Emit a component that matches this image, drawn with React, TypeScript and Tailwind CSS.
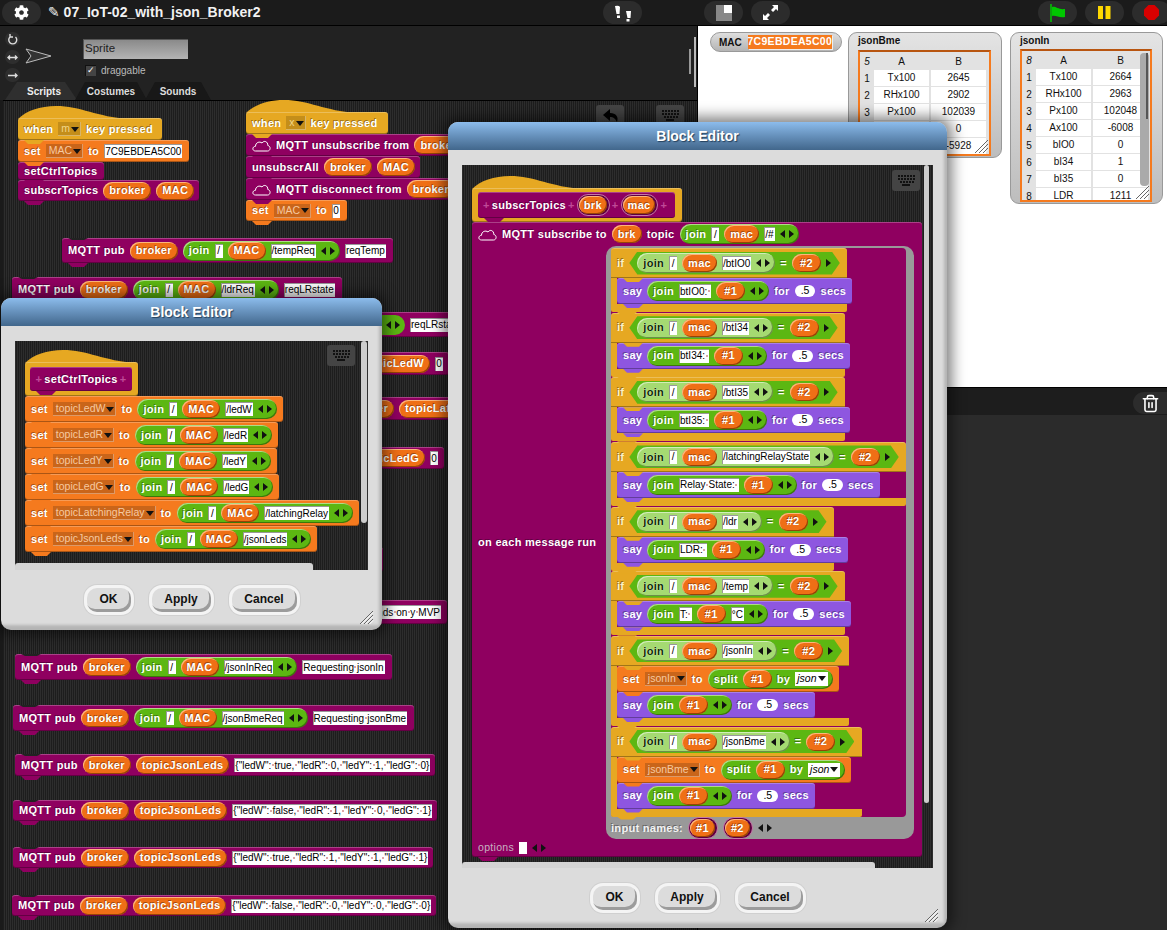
import React from 'react';
import { FaCog } from 'react-icons/fa';
import { Trash2 } from 'lucide-react';

type Tone = 'purple' | 'orange' | 'yellow' | 'violet';

const tones: Record<Tone, string> = {
  purple: 'bg-[#8f0060]',
  orange: 'bg-[#f57a1e]',
  yellow: 'bg-[#e6a822]',
  violet: 'bg-[#8e56e0]',
};

const stripes =
  'bg-[repeating-linear-gradient(90deg,#2d2d2d_0px,#2d2d2d_1px,#1d1d1d_1px,#1d1d1d_2px)]';

const Block: React.FC<{
  tone?: Tone;
  className?: string;
  bump?: boolean;
  notch?: boolean;
  children?: React.ReactNode;
}> = ({ tone = 'purple', className = '', bump = true, notch = false, children }) => (
  <div
    className={`relative flex shrink-0 items-center gap-[5px] self-start whitespace-nowrap rounded-[3px] pl-[6px] pr-[6px] text-[11px] font-bold tracking-[0.3px] text-white [text-shadow:-1px_-1px_0_rgba(0,0,0,0.35)] shadow-[inset_0_1px_0_rgba(255,255,255,0.25),inset_0_-1px_0_rgba(0,0,0,0.3)] ${tones[tone]} ${className}`}
  >
    {notch && (
      <span className="absolute left-[6px] top-0 h-[2px] w-[20px] bg-[#222] [clip-path:polygon(0_0,100%_0,80%_100%,20%_100%)]" />
    )}
    {children}
    {bump && (
      <span
        className={`absolute left-[6px] top-full z-10 h-[4px] w-[20px] [clip-path:polygon(0_0,100%_0,80%_100%,20%_100%)] ${tones[tone]}`}
      />
    )}
  </div>
);

const HatCurve = () => (
  <svg className="absolute bottom-full left-0 -mb-px" width="110" height="13" viewBox="0 0 110 13">
    <path d="M0 13 C8 5 22 0 38 0 C62 0 80 11 110 13 Z" fill="#e6a822" />
  </svg>
);

const Pill: React.FC<{ children: React.ReactNode; className?: string }> = ({ children, className = '' }) => (
  <span
    className={`inline-flex h-[18px] shrink-0 items-center rounded-full bg-[#ef6f16] px-[6px] text-[11px] font-bold text-white shadow-[inset_1px_1px_0_rgba(255,200,150,0.8),inset_-1px_-1px_0_rgba(110,50,0,0.7)] ${className}`}
  >
    {children}
  </span>
);

const Hash: React.FC<{ children: string }> = ({ children }) => <Pill className="px-[8px]!">{children}</Pill>;

const Param: React.FC<{ children: React.ReactNode; pad: string }> = ({ children, pad }) => (
  <span className="inline-flex rounded-full border border-[#c47aa8] bg-[#5e0040] p-px pr-[2px]">
    <Pill className={pad}>{children}</Pill>
  </span>
);

const Plus = () => <span className="text-[#c04a98] [text-shadow:none]">+</span>;

const Txt: React.FC<{ children: string }> = ({ children }) => (
  <span className="inline-flex h-[14px] min-w-[8px] shrink-0 items-center justify-center bg-white px-[1px] text-[10px] font-normal tracking-normal text-black [text-shadow:none] shadow-[inset_1px_1px_0_#999]">
    {children.split('·').map((part, i) => (
      <React.Fragment key={i}>
        {i > 0 && <span className="mx-[0.5px] h-[2px] w-[2px] rounded-full bg-[#d08a8a]" />}
        {part}
      </React.Fragment>
    ))}
  </span>
);

const Num: React.FC<{ children: string }> = ({ children }) => (
  <span className="inline-flex h-[12px] shrink-0 items-center rounded-full bg-white px-[6px] text-[10.5px] font-normal tracking-normal text-black [text-shadow:none]">
    {children}
  </span>
);

const Caret: React.FC<{ className?: string }> = ({ className = '' }) => (
  <svg className={`shrink-0 ${className}`} width="8" height="5" viewBox="0 0 8 5">
    <path d="M0 0H8L4 5Z" fill="#111" />
  </svg>
);

const Drop: React.FC<{ children: string; yellow?: boolean }> = ({ children, yellow }) => (
  <span
    className={`inline-flex h-[14px] shrink-0 items-center gap-[1px] pl-[3px] pr-[2px] text-[10.5px] font-normal tracking-normal [text-shadow:none] shadow-[inset_-1px_-1px_0_rgba(255,255,255,0.35)] ${
      yellow ? 'bg-[#c48e1a] text-[#f2d689]' : 'bg-[#c9651a] text-[#f6c9a0]'
    }`}
  >
    {children}
    <Caret />
  </span>
);

const Arrows: React.FC = () => (
  <svg className="shrink-0" width="14" height="10" viewBox="0 0 14 10">
    <path d="M5 1 L0 5 L5 9Z M9 1 L14 5 L9 9Z" fill="#111" />
  </svg>
);

const Join: React.FC<{ children: React.ReactNode; light?: boolean; label?: string }> = ({
  children,
  light,
  label = 'join',
}) => (
  <span
    className={`inline-flex h-[20px] shrink-0 items-center gap-[5px] rounded-full pl-[6px] pr-[5px] shadow-[inset_1px_1px_0_rgba(255,255,255,0.5),inset_-1px_-1px_0_rgba(0,0,0,0.35)] ${
      light ? 'bg-[#a5da72]' : 'bg-[#5cb712]'
    }`}
  >
    {label && <span className={light ? 'text-[#0e2a00] [text-shadow:0_0_1px_#fff]' : ''}>{label}</span>}
    {children}
  </span>
);

const Cloud = () => (
  <svg className="shrink-0" width="19" height="13" viewBox="0 0 19 13">
    <path
      d="M3.5 12 C0 12 0 7.5 3.5 7.3 C3.5 3.5 7.5 2 10 4 C12 1 16 2.5 15.8 6.5 C19 7 18.8 12 15.5 12 Z"
      fill="none"
      stroke="#fff"
    />
  </svg>
);

const Pub: React.FC<{ topic?: string; join?: string; text: string; className?: string }> = ({
  topic,
  join,
  text,
  className = '',
}) => (
  <Block notch className={className}>
    <span>MQTT pub</span>
    <Pill>broker</Pill>
    {topic && <Pill>{topic}</Pill>}
    {join && (
      <Join>
        <Txt>/</Txt>
        <Pill>MAC</Pill>
        <Txt>{join}</Txt>
        <Arrows />
      </Join>
    )}
    <Txt>{text}</Txt>
  </Block>
);

const SetTopic: React.FC<{ name: string; path: string }> = ({ name, path }) => (
  <Block tone="orange" className="h-[26px]">
    <span>set</span>
    <Drop>{name}</Drop>
    <span>to</span>
    <Join>
      <Txt>/</Txt>
      <Pill>MAC</Pill>
      <Txt>{path}</Txt>
      <Arrows />
    </Join>
  </Block>
);

const Pred: React.FC<{ path: string }> = ({ path }) => (
  <span className="inline-flex h-[23px] shrink-0 items-center gap-[5px] bg-[#5cb712] pl-[8px] pr-[9px] [clip-path:polygon(8px_0,calc(100%-8px)_0,100%_50%,calc(100%-8px)_100%,8px_100%,0_50%)]">
    <Join light>
      <Txt>/</Txt>
      <Pill>mac</Pill>
      <Txt>{path}</Txt>
      <Arrows />
    </Join>
    <span>=</span>
    <Hash>#2</Hash>
    <svg className="shrink-0" width="5" height="10" viewBox="0 0 5 10">
      <path d="M0 1 L5 5 L0 9Z" fill="#111" />
    </svg>
  </span>
);

const Say: React.FC<{ args: React.ReactNode }> = ({ args }) => (
  <Block tone="violet" className="h-[26px]">
    <span>say</span>
    <Join>
      {args}
      <Arrows />
    </Join>
    <span>for</span>
    <Num>.5</Num>
    <span>secs</span>
  </Block>
);

const SetSplit: React.FC<{ name: string }> = ({ name }) => (
  <Block tone="orange" className="h-[26px]">
    <span>set</span>
    <Drop>{name}</Drop>
    <span>to</span>
    <Join label="split">
      <Hash>#1</Hash>
      <span>by</span>
      <span className="inline-flex h-[14px] items-center gap-[1px] bg-white px-[2px] text-[10.5px] font-normal italic tracking-normal text-black [text-shadow:none]">
        json
        <Caret />
      </span>
    </Join>
  </Block>
);

const If: React.FC<{ path: string; width: string; children: React.ReactNode }> = ({ path, width, children }) => (
  <div className={`relative flex flex-col ${width}`}>
    <Block tone="yellow" bump={false} className="h-[30px] w-full rounded-b-none!">
      <span className="text-[#fff0c8]">if</span>
      <Pred path={path} />
      <span className="absolute left-[12px] top-full z-10 h-[4px] w-[20px] bg-[#e6a822] [clip-path:polygon(0_0,100%_0,80%_100%,20%_100%)]" />
    </Block>
    <div className="flex flex-col border-l-[6px] border-[#e6a822]">{children}</div>
    <div className="relative h-[8px] rounded-b-[2px] bg-[#e6a822]">
      <span className="absolute left-[6px] top-full z-10 h-[3px] w-[20px] bg-[#e6a822] [clip-path:polygon(0_0,100%_0,80%_100%,20%_100%)]" />
    </div>
  </div>
);

const Keyboard: React.FC<{ className?: string }> = ({ className = '' }) => (
  <div className={`absolute flex h-[21px] w-[28px] items-center justify-center rounded-[3px] bg-[#444] ${className}`}>
    <svg width="18" height="11" viewBox="0 0 18 11">
      <path
        d="M1 0h2v2H1zM4 0h2v2H4zM7 0h2v2H7zM10 0h2v2h-2zM13 0h2v2h-2zM16 0h2v2h-2zM1 3h2v2H1zM4 3h2v2H4zM7 3h2v2H7zM10 3h2v2h-2zM13 3h2v2h-2zM16 3h2v2h-2zM3 6h2v2H3zM6 6h2v2H6zM9 6h2v2H9zM12 6h2v2h-2zM15 6h2v2h-2zM5 9h8v2H5z"
        fill="#111"
      />
    </svg>
  </div>
);

const DialogButton: React.FC<{ children: string; width: string }> = ({ children, width }) => (
  <div className={`flex h-[30px] items-center justify-center rounded-[13px] bg-[#f4f4f4] p-[3px] shadow-[0_0_0_1px_#d0d0d0] ${width}`}>
    <div className="flex h-full w-full items-center justify-center rounded-[10px] bg-[#dcdcdc] pb-[2px] text-[12px] font-bold text-[#111] shadow-[inset_-2px_-3px_0_#9c9c9c]">
      {children}
    </div>
  </div>
);

const Grip: React.FC<{ className?: string }> = ({ className = '' }) => (
  <svg className={`absolute ${className}`} width="15" height="15" viewBox="0 0 15 15">
    <path d="M14 1 L1 14 M14 5 L5 14 M14 9 L9 14" stroke="#666" strokeWidth="1" />
    <path d="M14 2.5 L2.5 14 M14 6.5 L6.5 14 M14 10.5 L10.5 14" stroke="#fff" strokeWidth="1" />
  </svg>
);

const Dialog: React.FC<{ className: string; children: React.ReactNode }> = ({ className, children }) => (
  <div
    className={`absolute z-20 flex flex-col overflow-hidden rounded-[10px] bg-[#dcdcdc] shadow-[0_0_14px_5px_rgba(0,0,0,0.5)] ${className}`}
  >
    <div className="flex h-[28px] shrink-0 items-center justify-center bg-gradient-to-b from-[#8cbcec] to-[#42678c] text-[14px] font-bold text-white [text-shadow:1px_1px_1px_#24405c]">
      Block Editor
    </div>
    <div className="flex min-h-0 flex-1 flex-col px-[14px] pt-[15px] pb-[15px] shadow-[inset_-3px_-5px_3px_rgba(0,0,0,0.18)]">
      {children}
      <div className="mt-[15px] flex shrink-0 justify-center gap-[15px]">
        <DialogButton width="w-[50px]">OK</DialogButton>
        <DialogButton width="w-[65px]">Apply</DialogButton>
        <DialogButton width="w-[71px]">Cancel</DialogButton>
      </div>
    </div>
    <Grip className="bottom-[5px] right-[8px]" />
  </div>
);

const Watcher: React.FC<{
  title: string;
  count: string;
  rows: string[][];
  className: string;
  frame: string;
  scroll?: boolean;
}> = ({ title, count, rows, className, frame, scroll }) => (
  <div
    className={`absolute flex flex-col rounded-[9px] border border-[#999] bg-gradient-to-b from-[#e4e4e4] to-[#bdbdbd] px-[9px] pt-[2px] ${className}`}
  >
    <div className="pb-[2px] text-[10px] font-bold leading-[12px] text-[#111]">{title}</div>
    <div className={`relative overflow-hidden border-2 border-[#f57a1e] border-t-[#b85510] bg-[#e2e2e2] ${frame}`}>
      <div className="flex h-[18px] items-center text-center text-[10px] text-[#111]">
        <span className="w-[14px] italic">{count}</span>
        <span className="w-[55px]">A</span>
        <span className="ml-[2px] w-[55px]">B</span>
      </div>
      {rows.map(([a, b], i) => (
        <div key={a} className="mb-px flex h-[16px] items-center text-center text-[10px] text-[#111]">
          <span className="w-[14px]">{i + 1}</span>
          <span className="h-full w-[55px] bg-white leading-[16px]">{a}</span>
          <span className="ml-[2px] h-full w-[55px] bg-white leading-[16px]">{b}</span>
        </div>
      ))}
      {scroll && (
        <div className="absolute right-[1px] top-[2px] h-[133px] w-[9px] rounded-[4px] bg-[#aaa]">
          <span className="absolute left-[6px] top-0 h-[66px] w-[2px] bg-[#555]" />
        </div>
      )}
      <Grip className="bottom-0 right-0" />
    </div>
  </div>
);

const TopPill: React.FC<{ className?: string; children: React.ReactNode }> = ({ className = '', children }) => (
  <div className={`flex h-[23px] w-[39px] shrink-0 items-center justify-center rounded-full bg-[#2c2c2c] ${className}`}>
    {children}
  </div>
);

const RoundBtn: React.FC<{ d: string }> = ({ d }) => (
  <div className="flex h-[15px] w-[15px] items-center justify-center rounded-full bg-[#2e2e2e]">
    <svg width="11" height="11" viewBox="0 0 11 11">
      <path d={d} fill="none" stroke="#ddd" strokeWidth="1.4" />
    </svg>
  </div>
);

const bmeRows = [
  ['Tx100', '2645'],
  ['RHx100', '2902'],
  ['Px100', '102039'],
  ['Ax100', '0'],
  ['bIO0', '-5928'],
];

const inRows = [
  ['Tx100', '2664'],
  ['RHx100', '2963'],
  ['Px100', '102048'],
  ['Ax100', '-6008'],
  ['bIO0', '0'],
  ['bI34', '1'],
  ['bI35', '0'],
  ['LDR', '1211'],
];

const App: React.FC = () => (
  <div className="relative h-[930px] w-[1167px] overflow-hidden bg-[#222] font-['Liberation_Sans',Arial,sans-serif]">
    {/* top bar */}
    <div className="flex h-[26px] items-center border-b border-black bg-[#1b1b1b]">
      <div className="flex w-[603px] shrink-0 items-center">
        <TopPill className="ml-[2px]">
          <FaCog size={15} color="#fff" />
        </TopPill>
        <span className="ml-[7px] whitespace-nowrap text-[14px] font-bold text-[#f2f2f2]">
          <span className="font-['DejaVu_Sans',sans-serif] font-normal">✎</span> 07_IoT-02_with_json_Broker2
        </span>
      </div>
      <TopPill>
        <svg width="18" height="18" viewBox="0 0 18 18">
          <path d="M1 2 Q5 1 6 3 L5.500 10 H2.500 Z M3 11.500 h3 v2.500 h-3z M12 7 h5 l-.5 7 h-3 Z M12.500 15 h3 v2.500 h-3z" fill="#fff" />
        </svg>
      </TopPill>
      <TopPill className="ml-[62px]">
        <svg width="18" height="18" viewBox="0 0 18 18">
          <rect x="1" y="1" width="16" height="16" fill="#888" />
          <rect x="9" y="1" width="8" height="8" fill="#fff" />
        </svg>
      </TopPill>
      <TopPill className="ml-[8px]">
        <svg width="17" height="17" viewBox="0 0 17 17">
          <path d="M10 1 H16 V7 L14 5 L11 8 L9 6 L12 3Z M7 16 H1 V10 L3 12 L6 9 L8 11 L5 14Z" fill="#fff" />
        </svg>
      </TopPill>
      <TopPill className="ml-auto">
        <svg width="16" height="18" viewBox="0 0 16 18">
          <path d="M1 0 V18" stroke="#00c800" strokeWidth="1.5" />
          <path d="M2 3 C6 2 8 6 15 5 V13 C9 14 6 11 2 12Z" fill="#00c800" />
        </svg>
      </TopPill>
      <TopPill className="ml-[8px]">
        <svg width="13" height="13" viewBox="0 0 13 13">
          <path d="M0 0H5V13H0Z M7.500 0H12.500V13H7.500Z" fill="#ffd800" />
        </svg>
      </TopPill>
      <TopPill className="-mr-[4px] ml-[8px]">
        <svg width="15" height="15" viewBox="0 0 15 15">
          <path d="M4.500 0H10.500L15 4.500V10.500L10.500 15H4.500L0 10.500V4.500Z" fill="#d80000" />
        </svg>
      </TopPill>
    </div>

    <div className="flex h-[904px]">
      {/* sprite editor */}
      <div className="flex w-[698px] shrink-0 flex-col border-r border-black">
        <div className="relative flex h-[74px] shrink-0 flex-col bg-[#222]">
          <div className="flex h-[56px] pl-[5px] pt-[6px]">
            <div className="flex flex-col gap-[4px]">
              <RoundBtn d="M8.500 3 A4 4 0 1 1 3 3 M3 0 V3 H6" />
              <RoundBtn d="M1 5.500 H10 M3 3.500 L1 5.500 L3 7.500 M8 3.500 L10 5.500 L8 7.500" />
              <RoundBtn d="M1 5.500 H10 M8 3.500 L10 5.500 L8 7.500" />
            </div>
            <svg className="ml-[5px] mt-[16px]" width="28" height="16" viewBox="0 0 28 16">
              <path d="M1 1 L26 8 L1 15 L6 8Z" fill="#333" stroke="#bbb" strokeWidth="1" />
            </svg>
            <div className="ml-[30px] mt-[7px] flex flex-col">
              <div className="flex h-[20px] w-[105px] items-center bg-gradient-to-b from-[#888] to-[#b4b4b4] pl-[2px] text-[11.5px] text-[#222] shadow-[inset_1px_1px_0_#555]">
                Sprite
              </div>
              <div className="ml-[2px] mt-[4px] flex items-center gap-[5px] text-[10px] text-[#bbb]">
                <span className="flex h-[11px] w-[11px] items-center justify-center bg-[#444] text-[9px] leading-none text-white shadow-[inset_1px_1px_0_#111]">
                  ✓
                </span>
                draggable
              </div>
            </div>
          </div>
          <div className="absolute bottom-0 left-[5px] flex text-[10px] font-bold">
            <div className="flex h-[18px] w-[72px] items-center justify-center bg-[#2f2f2f] pl-[6px] text-[#eee] [clip-path:polygon(12px_0,60px_0,72px_100%,0_100%)]">
              Scripts
            </div>
            <div className="-ml-[2px] flex h-[18px] w-[72px] items-center justify-center bg-[#181818] text-[#ddd] [clip-path:polygon(10px_0,62px_0,72px_100%,0_100%)]">
              Costumes
            </div>
            <div className="-ml-[2px] flex h-[18px] w-[66px] items-center justify-center bg-[#181818] text-[#ddd] [clip-path:polygon(10px_0,56px_0,66px_100%,0_100%)]">
              Sounds
            </div>
          </div>
          <span className="absolute right-[1px] top-[11px] h-[50px] w-[2px] bg-[#bbb]" />
          <span className="absolute right-[6px] top-[23px] h-[25px] w-[2px] bg-[#999]" />
        </div>

        {/* scripts canvas: blocks sit where the user dropped them */}
        <div className={`relative flex-1 shadow-[inset_3px_0_0_#1a1a1a,inset_0_1px_0_#000] ${stripes}`}>
          <div className="absolute left-[18px] top-[18px] flex flex-col">
            <div className="relative">
              <HatCurve />
              <Block tone="yellow" className="h-[22px] w-[144px]">
                <span>when</span>
                <Drop yellow>m</Drop>
                <span>key pressed</span>
              </Block>
            </div>
            <Block tone="orange" className="h-[22px] w-[171px]">
              <span>set</span>
              <Drop>MAC</Drop>
              <span>to</span>
              <Txt>7C9EBDEA5C00</Txt>
            </Block>
            <Block className="h-[18px] w-[86px]">
              <span>setCtrlTopics</span>
            </Block>
            <Block className="h-[21px] w-[181px]">
              <span>subscrTopics</span>
              <Pill>broker</Pill>
              <Pill>MAC</Pill>
            </Block>
          </div>

          <div className="absolute left-[246px] top-[12px] flex flex-col">
            <div className="relative">
              <HatCurve />
              <Block tone="yellow" className="h-[22px] w-[142px]">
                <span>when</span>
                <Drop yellow>x</Drop>
                <span>key pressed</span>
              </Block>
            </div>
            <Block className="h-[22px]">
              <Cloud />
              <span>MQTT unsubscribe from</span>
              <Pill>broker</Pill>
            </Block>
            <Block className="h-[22px] w-[174px]">
              <span>unsubscrAll</span>
              <Pill>broker</Pill>
              <Pill>MAC</Pill>
            </Block>
            <Block className="h-[22px]">
              <Cloud />
              <span>MQTT disconnect from</span>
              <Pill>broker</Pill>
            </Block>
            <Block tone="orange" className="h-[21px] w-[101px]">
              <span>set</span>
              <Drop>MAC</Drop>
              <span>to</span>
              <Txt>0</Txt>
            </Block>
          </div>

          <div className="absolute left-[596px] top-[5px] flex h-[21px] w-[28px] items-center justify-center rounded-[3px] bg-[#444]">
            <svg width="17" height="15" viewBox="0 0 17 15">
              <path d="M1 7 L8 1 V5 C14 5 17 9 15 14 C13 10 11 9 8 9 V13 Z" fill="#000" />
            </svg>
          </div>
          <Keyboard className="left-[656px] top-[5px]" />

          <div className="absolute left-[62px] top-[138px]">
            <Pub join="/tempReq" text="reqTemp" className="h-[25px] w-[331px]" />
          </div>
          <div className="absolute left-[12px] top-[177px]">
            <Pub join="/ldrReq" text="reqLRstate" className="h-[25px] w-[330px]" />
          </div>

          {/* ends of scripts that stick out from behind the two dialogs */}
          <div className="absolute right-[234px] top-[212px]">
            <Block bump={false} className="h-[25px] w-[100px]">
              <span className="ml-auto flex h-[20px] w-[36px] shrink-0 items-center justify-end rounded-r-full bg-[#5cb712] pr-[5px]">
                <Arrows />
              </span>
              <Txt>reqLRstate</Txt>
            </Block>
          </div>
          <div className="absolute right-[248px] top-[252px]">
            <Block bump={false} className="h-[23px]">
              <Pill>topicLedW</Pill>
              <Txt>0</Txt>
            </Block>
          </div>
          <div className="absolute left-[340px] top-[297px]">
            <Block bump={false} className="h-[23px]">
              <Pill>broker</Pill>
              <Pill>topicLatchingRelay</Pill>
              <Txt>1</Txt>
            </Block>
          </div>
          <div className="absolute right-[253px] top-[347px]">
            <Block bump={false} className="h-[22px]">
              <Pill>topicLedG</Pill>
              <Txt>0</Txt>
            </Block>
          </div>
          <div className="absolute left-[360px] top-[447px]">
            <Block bump={false} className="h-[25px] w-[23px]" />
          </div>
          <div className="absolute right-[250px] top-[500px]">
            <Block bump={false} className="h-[24px]">
              <Txt>Commands·on·y·MVP</Txt>
            </Block>
          </div>

          <div className="absolute left-[15px] top-[554px]">
            <Pub join="/jsonInReq" text="Requesting·jsonIn" className="h-[26px] w-[377px]" />
          </div>
          <div className="absolute left-[13px] top-[605px]">
            <Pub join="/jsonBmeReq" text="Requesting·jsonBme" className="h-[26px] w-[401px]" />
          </div>
          <div className="absolute left-[15px] top-[654px]">
            <Pub
              topic="topicJsonLeds"
              text={'{"ledW":·true,·"ledR":·0,·"ledY":·1,·"ledG":·0}'}
              className="h-[22px] w-[420px]"
            />
          </div>
          <div className="absolute left-[13px] top-[700px]">
            <Pub
              topic="topicJsonLeds"
              text={'{"ledW":·false,·"ledR":·1,·"ledY":·0,·"ledG":·1}'}
              className="h-[21px] w-[424px]"
            />
          </div>
          <div className="absolute left-[13px] top-[747px]">
            <Pub
              topic="topicJsonLeds"
              text={'{"ledW":·true,·"ledR":·1,·"ledY":·1,·"ledG":·1}'}
              className="h-[21px] w-[420px]"
            />
          </div>
          <div className="absolute left-[12px] top-[795px]">
            <Pub
              topic="topicJsonLeds"
              text={'{"ledW":·false,·"ledR":·0,·"ledY":·0,·"ledG":·0}'}
              className="h-[21px] w-[424px]"
            />
          </div>
        </div>
      </div>

      {/* stage and corral */}
      <div className="flex min-w-0 flex-1 flex-col">
        <div className="relative h-[361px] shrink-0 bg-white">
          <div className="absolute left-[12px] top-[6px] flex h-[20px] w-[132px] items-center gap-[6px] rounded-full border border-[#999] bg-gradient-to-b from-[#dedede] to-[#b4b4b4] pl-[8px] text-[10px] font-bold text-[#111]">
            MAC
            <span className="flex h-[14px] w-[84px] items-center justify-center bg-[#f57a1e] text-[10.5px] tracking-[0.3px] text-white shadow-[1px_1px_0_#eee]">
              7C9EBDEA5C00
            </span>
          </div>
          <Watcher
            title="jsonBme"
            count="5"
            rows={bmeRows}
            className="left-[150px] top-[6px] h-[126px] w-[154px]"
            frame="mt-[1px] h-[106px] w-[133px]"
          />
          <Watcher
            title="jsonIn"
            count="8"
            rows={inRows}
            className="left-[312px] top-[6px] h-[172px] w-[153px]"
            frame="h-[153px] w-[132px]"
            scroll
          />
        </div>
        <div className="flex h-[28px] shrink-0 items-start justify-end border-t border-black bg-[#1d1d1d] pt-[4px]">
          <div className="flex h-[22px] w-[34px] items-center justify-center rounded-l-full bg-[#2c2c2c]">
            <Trash2 size={19} color="#fff" strokeWidth={2} />
          </div>
        </div>
        <div className="flex-1 bg-[#2b2b2b]" />
      </div>
    </div>

    {/* left block editor */}
    <Dialog className="left-[1px] top-[298px] h-[332px] w-[381px]">
      <div className={`relative min-h-0 flex-1 overflow-hidden pl-[10px] pt-[21px] ${stripes}`}>
        <Keyboard className="right-[13px] top-[4px]" />
        <div className="relative w-fit">
          <HatCurve />
          <Block tone="yellow" bump={false} className="h-[34px] w-[113px] pl-[5px]!">
            <Block className="h-[24px] w-[102px] justify-center gap-[2px]! self-center! pl-[2px]! pr-[2px]!">
              <Plus />
              <span>setCtrlTopics</span>
              <Plus />
            </Block>
          </Block>
        </div>
        <div className="flex flex-col">
          <SetTopic name="topicLedW" path="/ledW" />
          <SetTopic name="topicLedR" path="/ledR" />
          <SetTopic name="topicLedY" path="/ledY" />
          <SetTopic name="topicLedG" path="/ledG" />
          <SetTopic name="topicLatchingRelay" path="/latchingRelay" />
          <SetTopic name="topicJsonLeds" path="/jsonLeds" />
        </div>
        <span className="absolute right-[1px] top-0 h-[182px] w-[6px] rounded-[3px] bg-[#ccc]" />
        <span className="absolute bottom-0 left-0 h-[7px] w-[298px] rounded-t-[3px] bg-[#d4d4d4]" />
      </div>
    </Dialog>

    {/* right block editor */}
    <Dialog className="left-[448px] top-[122px] h-[806px] w-[499px]">
      <div className={`relative min-h-0 flex-1 overflow-hidden pl-[10px] pt-[23px] ${stripes}`}>
        <Keyboard className="right-[13px] top-[5px]" />
        <div className="relative w-fit">
          <HatCurve />
          <Block tone="yellow" bump={false} className="h-[34px] w-[210px] pl-[6px]!">
            <Block className="h-[26px] w-[197px] gap-[2px]! self-center! pl-[5px]!">
              <Plus />
              <span>subscrTopics</span>
              <Plus />
              <Param pad="px-[5px]!">brk</Param>
              <Plus />
              <Param pad="px-[5px]!">mac</Param>
              <Plus />
            </Block>
          </Block>
        </div>
        <Block className="w-[450px] flex-col items-start! gap-0! pr-[8px]!">
          <div className="flex h-[24px] items-center gap-[5px]">
            <Cloud />
            <span>MQTT subscribe to</span>
            <Pill>brk</Pill>
            <span>topic</span>
            <Join>
              <Txt>/</Txt>
              <Pill>mac</Pill>
              <Txt>/#</Txt>
              <Arrows />
            </Join>
          </div>
          <div className="flex items-center">
            <span className="w-[128px]">on each message run</span>
            <div className="flex w-[308px] flex-col rounded-[10px] bg-[#999] pl-[5px] pr-[8px] pt-[2px]">
              <div className="flex h-[569px] flex-col gap-[0.67px] rounded-[4px] bg-[#8f0060]">
                <If path="/btIO0" width="w-[236px]">
                  <Say args={<><Txt>btIO0:·</Txt><Hash>#1</Hash></>} />
                </If>
                <If path="/btI34" width="w-[234px]">
                  <Say args={<><Txt>btI34:·</Txt><Hash>#1</Hash></>} />
                </If>
                <If path="/btI35" width="w-[234px]">
                  <Say args={<><Txt>btI35:·</Txt><Hash>#1</Hash></>} />
                </If>
                <If path="/latchingRelayState" width="w-[295px]">
                  <Say args={<><Txt>Relay·State:·</Txt><Hash>#1</Hash></>} />
                </If>
                <If path="/ldr" width="w-[223px]">
                  <Say args={<><Txt>LDR:·</Txt><Hash>#1</Hash></>} />
                </If>
                <If path="/temp" width="w-[234px]">
                  <Say args={<><Txt>T:·</Txt><Hash>#1</Hash><Txt>°C</Txt></>} />
                </If>
                <If path="/jsonIn" width="w-[238px]">
                  <SetSplit name="jsonIn" />
                  <Say args={<Hash>#1</Hash>} />
                </If>
                <If path="/jsonBme" width="w-[251px]">
                  <SetSplit name="jsonBme" />
                  <Say args={<Hash>#1</Hash>} />
                </If>
              </div>
              <div className="flex h-[22px] items-center gap-[5px] text-[#f2f2f2]">
                <span>input names:</span>
                <Param pad="px-[6px]!">#1</Param>
                <Param pad="px-[6px]!">#2</Param>
                <Arrows />
              </div>
            </div>
          </div>
          <div className="flex h-[18px] items-center gap-[5px] text-[10.5px] font-normal tracking-[0.3px] text-[#c8b0c0] [text-shadow:none]">
            options
            <span className="h-[12px] w-[8px] bg-white" />
            <Arrows />
          </div>
        </Block>
        <span className="absolute right-[4px] top-0 h-[638px] w-[5px] rounded-[3px] bg-[#ccc]" />
        <span className="absolute bottom-0 left-0 h-[6px] w-[413px] rounded-t-[3px] bg-[#d4d4d4]" />
      </div>
    </Dialog>
  </div>
);

export default App;
